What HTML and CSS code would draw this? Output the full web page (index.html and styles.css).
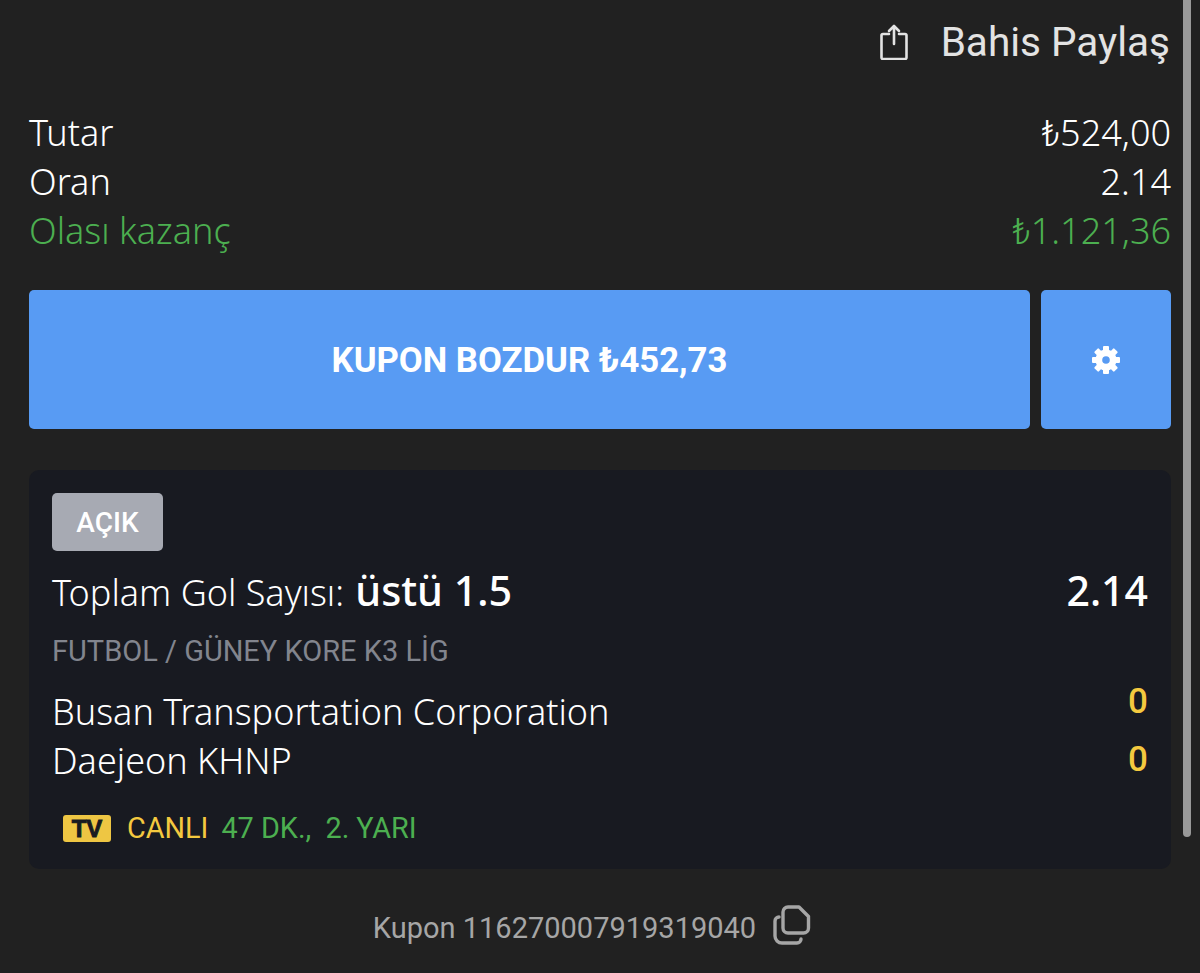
FILE: index.html
```html
<!DOCTYPE html>
<html lang="tr">
<head>
    <meta charset="UTF-8">
    <title>Kupon</title>
    <link rel="stylesheet" href="styles.css">
</head>
<body>
    <div class="scrollbar"></div>
    <div class="page">
        <div class="share-row">
            <svg width="30" height="36" viewBox="0 0 30 36" fill="none" stroke="#e3e3e3" stroke-width="2.600" stroke-linecap="round" stroke-linejoin="round">
                <path d="M10 10H4a1.500 1.500 0 0 0-1.500 1.500v22a1.500 1.500 0 0 0 1.500 1.500h22a1.500 1.500 0 0 0 1.500-1.500v-22A1.500 1.500 0 0 0 26 10h-6"/>
                <path d="M15 20V2M10 7l5-5 5 5"/>
            </svg>
            <span class="share-text">Bahis Paylaş</span>
        </div>

        <div class="summary">
            <div class="summary-row"><span>Tutar</span><span><span class="lira">₺</span>524,00</span></div>
            <div class="summary-row"><span>Oran</span><span>2.14</span></div>
            <div class="summary-row win"><span>Olası kazanç</span><span><span class="lira">₺</span>1.121,36</span></div>
        </div>

        <div class="actions">
            <button class="cashout">KUPON BOZDUR ₺452,73</button>
            <button class="settings">
                <svg width="28" height="30" viewBox="0 0 28 28" fill="#fff">
                    <g>
                        <rect x="11" y="0" width="6" height="28" rx="1"/>
                        <rect x="11" y="0" width="6" height="28" rx="1" transform="rotate(45 14 14)"/>
                        <rect x="11" y="0" width="6" height="28" rx="1" transform="rotate(90 14 14)"/>
                        <rect x="11" y="0" width="6" height="28" rx="1" transform="rotate(135 14 14)"/>
                    </g>
                    <circle cx="14" cy="14" r="10.500"/>
                    <circle cx="14" cy="14" r="3.800" fill="#589bf3"/>
                </svg>
            </button>
        </div>

        <div class="bet-card">
            <span class="status">AÇIK</span>
            <div class="market-row">
                <div class="market">Toplam Gol Sayısı: <b>üstü 1.5</b></div>
                <div class="odds">2.14</div>
            </div>
            <div class="league">FUTBOL / GÜNEY KORE K3 LİG</div>
            <div class="teams">
                <div class="team-names">
                    <div>Busan Transportation Corporation</div>
                    <div>Daejeon KHNP</div>
                </div>
                <div class="scores">
                    <div>0</div>
                    <div>0</div>
                </div>
            </div>
            <div class="live-row">
                <span class="tv-badge">TV</span>
                <span class="live">CANLI</span>
                <span class="minute">47 DK., &nbsp;2. YARI</span>
            </div>
        </div>

        <div class="coupon-row">
            <span class="coupon-no">Kupon 116270007919319040</span>
            <svg width="38" height="40" viewBox="0 0 38 40" fill="none" stroke="#a6a6a6" stroke-width="3.400" stroke-linecap="round" stroke-linejoin="round">
                <path d="M15 2h11l9.500 9.500V23a5 5 0 0 1-5 5H15a5 5 0 0 1-5-5V7a5 5 0 0 1 5-5z"/>
                <path d="M6 12a4 4 0 0 0-4 4v15a7 7 0 0 0 7 7h15a4 4 0 0 0 4-4"/>
            </svg>
        </div>
    </div>
</body>
</html>
```

FILE: styles.css
```css
/* Main Styles */
html, body {
    height: 100%;
}
body {
    margin: 0;
    background-color: #212121;
    color: #ffffff;
    font-family: "Noto Sans", "Open Sans", sans-serif;
    font-weight: 300;
    overflow: hidden;
    position: relative;
}
.page {
    padding: 0 29px;
}
.scrollbar {
    position: absolute;
    top: 0;
    left: 1183px;
    width: 8px;
    height: 837px;
    background-color: #999999;
    border-radius: 0 0 4px 4px;
}
.share-row {
    display: flex;
    justify-content: flex-end;
    align-items: center;
    gap: 32px;
    height: 84px;
    padding-right: 1px;
    color: #e3e3e3;
}
.share-text {
    font-family: Roboto, sans-serif;
    font-size: 40.500px;
    font-weight: 400;
}
.summary {
    margin-top: 24px;
}
.summary-row {
    display: flex;
    justify-content: space-between;
    font-size: 36px;
    line-height: 49px;
}
.summary-row.win {
    color: #4caf50;
}
.lira {
    font-family: Roboto, sans-serif;
    line-height: 0;
}
.actions {
    display: flex;
    gap: 11px;
    margin-top: 35px;
}
.actions button {
    height: 139px;
    border: none;
    border-radius: 5px;
    background-color: #589bf3;
    color: #ffffff;
    display: flex;
    align-items: center;
    justify-content: center;
}
.cashout {
    flex: 1;
    padding-top: 2px;
    font-family: Roboto, sans-serif;
    font-size: 34.700px;
    font-weight: 700;
}
.settings {
    width: 130px;
    padding-top: 2px;
}
.bet-card {
    margin-top: 41px;
    padding: 23px;
    height: 353px;
    background-color: #181a21;
    border-radius: 10px;
}
.status {
    display: block;
    width: 111px;
    height: 58px;
    line-height: 60px;
    text-align: center;
    background-color: #a7aab3;
    border-radius: 5px;
    font-family: Roboto, sans-serif;
    font-size: 28px;
    font-weight: 500;
}
.market-row {
    display: flex;
    justify-content: space-between;
    align-items: baseline;
    margin-top: 11px;
    line-height: 56px;
}
.market {
    font-size: 36px;
}
.market b {
    margin-left: 2px;
    font-size: 41.300px;
    font-weight: 500;
}
.odds {
    font-size: 41px;
    font-weight: 500;
}
.league {
    margin-top: 13px;
    font-family: Roboto, sans-serif;
    font-size: 29px;
    font-weight: 400;
    line-height: 34px;
    color: #82858e;
}
.teams {
    display: flex;
    justify-content: space-between;
    margin-top: 19px;
}
.team-names {
    font-size: 36px;
    line-height: 49px;
}
.scores {
    margin-top: -14px;
    font-family: Roboto, sans-serif;
    font-size: 35px;
    font-weight: 500;
    line-height: 58px;
    color: #f4c93f;
}
.live-row {
    display: flex;
    align-items: center;
    margin-top: 22px;
    padding-left: 11px;
    font-family: Roboto, sans-serif;
    font-size: 28.800px;
    font-weight: 400;
}
.tv-badge {
    width: 48px;
    height: 27px;
    line-height: 28px;
    text-align: center;
    background-color: #eec643;
    color: #181a21;
    border-radius: 3px;
    font-family: "Liberation Sans", sans-serif;
    font-size: 24px;
    font-weight: 700;
    -webkit-text-stroke: 0.900px #181a21;
    margin-right: 16px;
}
.live {
    color: #f4c93f;
    margin-right: 13px;
}
.minute {
    color: #4caf50;
}
.coupon-row {
    display: flex;
    justify-content: center;
    align-items: center;
    gap: 17px;
    margin-top: 36px;
    padding-right: 16px;
    font-family: Roboto, sans-serif;
    font-size: 29px;
    font-weight: 400;
    color: #a6a6a6;
}
.coupon-no {
    margin-top: 6px;
}
```
